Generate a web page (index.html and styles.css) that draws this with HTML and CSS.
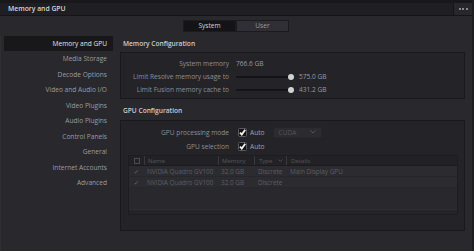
FILE: index.html
```html
<!DOCTYPE html>
<html>
<head>
<meta charset="utf-8">
<link rel="stylesheet" href="styles.css">
</head>
<body>
<div class="window">
  <div class="titlebar">
    <span class="title">Memory and GPU</span>
    <div class="more"><span></span><span></span><span></span></div>
  </div>
  <div class="tabs">
    <div class="tab active">System</div>
    <div class="tab">User</div>
  </div>
  <div class="main">
    <nav class="sidebar">
      <div class="nav-item active">Memory and GPU</div>
      <div class="nav-item">Media Storage</div>
      <div class="nav-item">Decode Options</div>
      <div class="nav-item">Video and Audio I/O</div>
      <div class="nav-item">Video Plugins</div>
      <div class="nav-item">Audio Plugins</div>
      <div class="nav-item">Control Panels</div>
      <div class="nav-item">General</div>
      <div class="nav-item">Internet Accounts</div>
      <div class="nav-item">Advanced</div>
    </nav>
    <section class="content">
      <div class="section-title first">Memory Configuration</div>
      <div class="group mem">
        <div class="row"><span class="label">System memory</span><span class="value">766.6 GB</span></div>
        <div class="row"><span class="label">Limit Resolve memory usage to</span><span class="slider"><span class="track"></span><span class="knob"></span></span><span class="value">575.0 GB</span></div>
        <div class="row"><span class="label">Limit Fusion memory cache to</span><span class="slider"><span class="track"></span><span class="knob"></span></span><span class="value">431.2 GB</span></div>
      </div>
      <div class="section-title">GPU Configuration</div>
      <div class="group gpu">
        <div class="row gpu-row"><span class="label">GPU processing mode</span>
          <svg class="check" width="9" height="9" viewBox="0 0 9 9"><rect x="0.5" y="0.5" width="8" height="8" rx="1" fill="#141417" stroke="#5a5a60"/><path d="M2 4.6 L3.8 6.6 L7.2 1.8" fill="none" stroke="#f2f2f2" stroke-width="1.8"/></svg>
          <span class="auto">Auto</span>
          <span class="select">CUDA<svg width="6" height="4" viewBox="0 0 6 4"><path d="M0.5 0.5 L3 3 L5.5 0.5" fill="none" stroke="#55555b" stroke-width="1"/></svg></span>
        </div>
        <div class="row gpu-row"><span class="label">GPU selection</span>
          <svg class="check" width="9" height="9" viewBox="0 0 9 9"><rect x="0.5" y="0.5" width="8" height="8" rx="1" fill="#141417" stroke="#5a5a60"/><path d="M2 4.6 L3.8 6.6 L7.2 1.8" fill="none" stroke="#f2f2f2" stroke-width="1.8"/></svg>
          <span class="auto">Auto</span>
        </div>
        <div class="table">
          <div class="tr th">
            <span class="c0"><svg width="6" height="6" viewBox="0 0 6 6"><rect x="0.5" y="0.5" width="5" height="5" fill="none" stroke="#4a4a50"/></svg></span>
            <span class="c1">Name</span>
            <span class="c2">Memory</span>
            <span class="c3">Type<svg width="5" height="3" viewBox="0 0 5 3"><path d="M0.5 0.5 L2.5 2.5 L4.5 0.5" fill="none" stroke="#4a4a50"/></svg></span>
            <span class="c4">Details</span>
          </div>
          <div class="tr">
            <span class="c0">✓</span>
            <span class="c1">NVIDIA Quadro GV100</span>
            <span class="c2">32.0 GB</span>
            <span class="c3">Discrete</span>
            <span class="c4">Main Display GPU</span>
          </div>
          <div class="tr">
            <span class="c0">✓</span>
            <span class="c1">NVIDIA Quadro GV100</span>
            <span class="c2">32.0 GB</span>
            <span class="c3">Discrete</span>
            <span class="c4"></span>
          </div>
          <div class="table-fill"></div>
          <div class="table-foot"></div>
        </div>
      </div>
    </section>
  </div>
</div>
</body>
</html>
```
FILE: styles.css
```css
* { box-sizing: border-box; }
html, body { margin: 0; padding: 0; }
body {
  width: 474px;
  height: 251px;
  overflow: hidden;
  background: #28282d;
  font-family: "Open Sans", "DejaVu Sans", sans-serif;
  font-size: 6.6px;
  color: #9b9ba0;
}
.window {
  height: 251px;
  display: flex;
  flex-direction: column;
  border-right: 2px solid #1e1e22;
}
.titlebar {
  height: 16px;
  display: flex;
  align-items: stretch;
  justify-content: space-between;
  background: #1f1f23;
  border-top: 3px solid #18181b;
  border-bottom: 1px solid #151518;
}
.title {
  padding-left: 8px;
  font-weight: 600;
  color: #d6d6d8;
  font-size: 6.8px;
  line-height: 11px;
}
.more {
  width: 19px;
  display: flex;
  align-items: center;
  justify-content: center;
  gap: 1.5px;
  background: #27272c;
  border-left: 1px solid #151518;
}
.more span {
  width: 2px;
  height: 2px;
  border-radius: 1px;
  background: #a8a8ad;
}
.tabs {
  display: flex;
  justify-content: center;
  padding-top: 4px;
  height: 20px;
}
.tab {
  width: 53px;
  height: 12px;
  line-height: 10px;
  text-align: center;
  background: #2f2f35;
  border: 1px solid #1b1b1f;
  color: #9a9aa0;
}
.tab.active {
  background: #141417;
  color: #d4d4d6;
}
.main {
  flex: 1;
  display: flex;
}
.sidebar {
  width: 113px;
  padding-left: 3px;
  border-left: 1px solid #2e2e33;
}
.nav-item {
  height: 15.45px;
  line-height: 15px;
  text-align: right;
  padding-right: 6px;
  color: #9d9da2;
  white-space: nowrap;
}
.nav-item.active {
  background: #18181b;
  color: #e2e2e4;
}
.content {
  flex: 1;
  padding-left: 7px;
  padding-right: 7px;
}
.section-title {
  height: 21px;
  padding: 7px 0 0 3px;
  font-size: 6.6px;
  font-weight: 600;
  color: #cdcdd0;
  white-space: nowrap;
}
.section-title.first {
  height: 16px;
  padding-top: 3px;
}
.group {
  background: #232328;
  border: 1px solid #19191c;
}
.group.mem {
  height: 47px;
  padding-top: 4px;
}
.group.gpu {
  height: 111px;
  padding-top: 4px;
}
.row {
  display: flex;
  align-items: center;
  height: 13px;
}
.gpu-row { height: 14px; }
.label {
  width: 108px;
  text-align: right;
  color: #8f8f94;
  margin-right: 7px;
  white-space: nowrap;
}
.value { color: #9a9a9f; white-space: nowrap; }
.slider {
  position: relative;
  width: 58px;
  height: 6px;
  margin-right: 5px;
  display: flex;
  align-items: center;
}
.track {
  flex: 1;
  height: 2px;
  background: #141416;
}
.knob {
  position: absolute;
  right: 0;
  top: 0;
  width: 6px;
  height: 6px;
  border-radius: 50%;
  background: #d2d2d4;
}
.check { margin-left: 2px; }
.auto {
  margin-left: 3px;
  color: #a2a2a7;
}
.select {
  margin-left: 8px;
  width: 49px;
  height: 11px;
  display: flex;
  align-items: center;
  justify-content: space-between;
  padding: 0 5px 0 5px;
  background: #2b2b30;
  border: 1px solid #26262a;
  color: #55555b;
}
.table {
  margin: 2px 0 0 7px;
  width: 330px;
  height: 60px;
  border: 1px solid #1d1d21;
  background: #28282d;
  display: flex;
  flex-direction: column;
  font-size: 6.4px;
  color: #5e5e64;
}
.tr {
  display: flex;
  height: 11px;
  align-items: center;
  background: #2b2b30;
  border-bottom: 1px solid #27272b;
}
.tr.th {
  height: 10px;
  background: #222226;
  border-bottom: 1px solid #1b1b1e;
  color: #56565c;
  font-size: 6px;
}
.tr span { display: flex; align-items: center; height: 100%; white-space: nowrap; overflow: hidden; }
.c0 { width: 15px; justify-content: center; color: #6c6c72; }
.c1 { width: 74px; padding-left: 3px; }
.c2 { width: 36px; padding-left: 3px; }
.c3 { width: 32px; padding-left: 4px; justify-content: space-between; padding-right: 3px; }
.c4 { flex: 1; padding-left: 4px; }
.th .c1, .th .c2, .th .c3, .th .c4 { border-left: 1px solid #38383e; }
.table-fill { flex: 1; }
.table-foot {
  height: 5px;
  background: #242428;
  border-top: 1px solid #2e2e33;
}
```
